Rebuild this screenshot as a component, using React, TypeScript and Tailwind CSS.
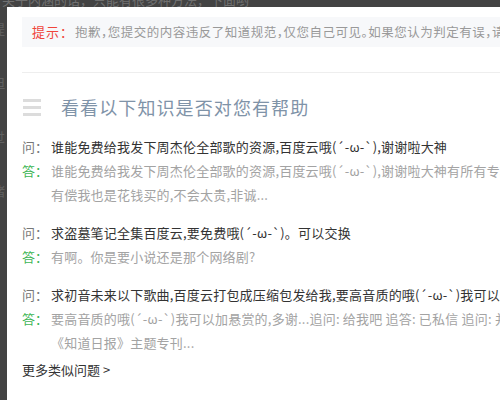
import React from "react";

const font = { fontFamily: '"Noto Sans CJK SC", "Noto Sans", sans-serif' };

function QA({ q, a, mt }: { q: string; a: string[]; mt: string }) {
  return (
    <div className={mt}>
      <div className="flex h-[24px] items-center whitespace-nowrap text-[13px] leading-[24px]">
        <span className="w-[29px] shrink-0 text-[#777]">问：</span>
        <span className="tracking-[0.2px] text-[#333]">{q}</span>
      </div>
      <div className="flex whitespace-nowrap text-[13px] leading-[24px]">
        <span className="w-[29px] shrink-0 text-[#3db554]">答：</span>
        <div className="flex flex-col tracking-[0.2px] text-[#a3a3a3]">
          {a.map((l, i) => (
            <span key={i}>{l}</span>
          ))}
        </div>
      </div>
    </div>
  );
}

export default function App() {
  return (
    <div
      className="relative h-[400px] w-[500px] overflow-hidden bg-[#434343]"
      style={font}
    >
      {/* background page text behind overlay */}
      <div className="absolute left-[2px] top-[-7px] whitespace-nowrap text-[13px] leading-[14px] text-[#707070]">
        关于内涵的话，只能有很多种方法，下面哟
      </div>
      <div className="absolute left-[-8px] top-[22px] flex flex-col gap-[40px] text-[13px] leading-[14px] text-[#606060]">
        <span>提</span>
        <span>但</span>
        <span>过</span>
        <span>诸</span>
      </div>

      <div className="absolute left-[7px] top-[7px] h-[420px] w-[700px] bg-white pl-[15px] pt-[10px]">
        <div className="flex h-[30px] items-center whitespace-nowrap bg-[#f7f8fa] pl-[10px]">
          <span className="text-[13px] tracking-[1px] text-[#f0443a]">提示：</span>
          <span className="ml-[1px] text-[12.5px] tracking-[0.5px] text-[#999] [font-feature-settings:'halt']">
            抱歉，您提交的内容违反了知道规范，仅您自己可见。如果您认为判定有误，请联系我们
          </span>
        </div>

        <div className="mt-[25px] h-[1px] bg-[#eeeeee]" />

        <div className="mt-[19px] flex h-[30px] items-center">
          <div className="flex w-[18px] flex-col gap-[4px] pl-[1px]">
            <div className="h-[3px] w-[18px] bg-[#dcdcdc]" />
            <div className="h-[3px] w-[18px] bg-[#dcdcdc]" />
            <div className="h-[3px] w-[18px] bg-[#dcdcdc]" />
          </div>
          <span className="ml-[21px] whitespace-nowrap text-[18px] tracking-[1.1px] text-[#7f93a8]">
            看看以下知识是否对您有帮助
          </span>
        </div>

        <QA
          mt="mt-[13px]"
          q="谁能免费给我发下周杰伦全部歌的资源,百度云哦(´-ω-`),谢谢啦大神"
          a={[
            "谁能免费给我发下周杰伦全部歌的资源,百度云哦(´-ω-`),谢谢啦大神有所有专辑的资源哦",
            "有偿我也是花钱买的,不会太贵,非诚...",
          ]}
        />
        <QA
          mt="mt-[14px]"
          q="求盗墓笔记全集百度云,要免费哦(´-ω-`)。可以交换"
          a={["有啊。你是要小说还是那个网络剧?"]}
        />
        <QA
          mt="mt-[14px]"
          q="求初音未来以下歌曲,百度云打包成压缩包发给我,要高音质的哦(´-ω-`)我可以加悬赏的"
          a={[
            "要高音质的哦(´-ω-`)我可以加悬赏的,多谢...追问: 给我吧 追答: 已私信 追问: 并没有收到",
            "《知道日报》主题专刊...",
          ]}
        />

        <div className="mt-[3px] h-[24px] whitespace-nowrap text-[13px] leading-[24px] text-[#333]">
          更多类似问题 &gt;
        </div>
      </div>
    </div>
  );
}
